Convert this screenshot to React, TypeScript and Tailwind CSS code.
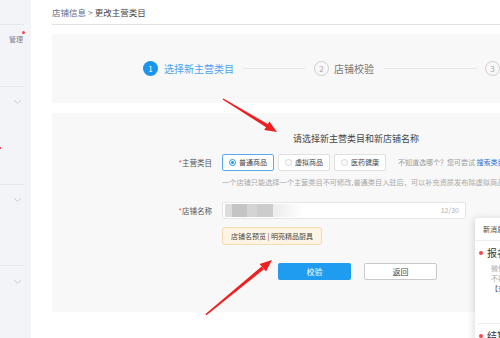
import React from "react";

const font = { fontFamily: '"Noto Sans CJK SC", "Noto Sans", sans-serif' };

function Chevron() {
  return (
    <svg width="9" height="6" viewBox="0 0 9 6" className="block">
      <path d="M1 1l3.5 3.5L8 1" fill="none" stroke="#c4c8d0" strokeWidth="0.9" />
    </svg>
  );
}

function Sidebar() {
  return (
    <div className="w-[31px] shrink-0 bg-[#f3f4f8] flex flex-col">
      <div className="h-[25px] w-[24px] border-b border-[#e6e8ee]" />
      <div className="h-[62px] w-[24px] border-b border-[#e6e8ee] flex justify-end pt-[9px] pr-[1px]">
        <span className="relative text-[7px] leading-[10px] text-[#7a8090]">
          管理
          <span className="absolute right-[-2px] top-[-3px] w-[3px] h-[3px] rounded-full bg-[#f5474a]" />
        </span>
      </div>
      <div className="h-[98px] w-[24px] border-b border-[#e6e8ee] relative">
        <div className="absolute left-[13px] top-[12px]"><Chevron /></div>
        <div className="absolute left-0 top-[60px] w-[1px] h-[2px] bg-[#f5474a]" />
      </div>
      <div className="h-[81px] w-[24px] border-b border-[#e6e8ee] relative">
        <div className="absolute left-[13px] top-[12px]"><Chevron /></div>
      </div>
      <div className="relative">
        <div className="absolute left-[13px] top-[13px]"><Chevron /></div>
      </div>
    </div>
  );
}

function Steps() {
  return (
    <div className="h-[69px] bg-[#f8f8f8] flex items-center pl-[91px]">
      <div className="w-[15px] h-[15px] rounded-full bg-[#1a94ee] text-white text-[8px] flex items-center justify-center shrink-0">1</div>
      <span className="ml-[6px] text-[10px] text-[#4ba3f3] whitespace-nowrap">选择新主营类目</span>
      <div className="ml-[9px] w-[62px] h-px bg-[#e6e6e6] shrink-0" />
      <div className="ml-[9px] w-[15px] h-[15px] rounded-full border border-[#cfcfcf] text-[#a8a8a8] text-[8px] flex items-center justify-center shrink-0">2</div>
      <span className="ml-[5px] text-[10px] text-[#777] whitespace-nowrap">店铺校验</span>
      <div className="ml-[10px] w-[93px] h-px bg-[#e6e6e6] shrink-0" />
      <div className="ml-[8px] w-[15px] h-[15px] rounded-full border border-[#cfcfcf] text-[#a8a8a8] text-[8px] flex items-center justify-center shrink-0">3</div>
    </div>
  );
}

function Radio({ label, checked }: { label: string; checked?: boolean }) {
  return (
    <div
      className={
        checked
          ? "w-[52px] h-[17px] bg-white border border-[#5aa9f0] rounded-[2px] flex items-center pl-[6px] shrink-0"
          : "w-[52px] h-[17px] bg-white border border-[#e0e0e0] rounded-[2px] flex items-center pl-[6px] shrink-0"
      }
    >
      {checked ? (
        <span className="w-[7px] h-[7px] rounded-full border border-[#1a94ee] flex items-center justify-center">
          <span className="w-[3px] h-[3px] rounded-full bg-[#1a94ee]" />
        </span>
      ) : (
        <span className="w-[7px] h-[7px] rounded-full border border-[#d4d4d4]" />
      )}
      <span className="ml-[3px] text-[7px] text-[#444] whitespace-nowrap">{label}</span>
    </div>
  );
}

function FormPanel() {
  return (
    <div className="mt-[10px] h-[199px] bg-[#f8f8f8] flex flex-col">
      <div className="pt-[20px] pl-[241px] text-[9px] leading-[12px] text-[#444] whitespace-nowrap">
        请选择新主营类目和新店铺名称
      </div>
      <div className="mt-[9px] flex items-center">
        <div className="w-[170px] pr-[10px] text-right text-[7.5px] text-[#555] shrink-0">
          <span className="text-[#f5474a]">*</span>主营类目
        </div>
        <div className="flex items-center gap-[4px]">
          <Radio label="普通商品" checked />
          <Radio label="虚拟商品" />
          <Radio label="医药健康" />
        </div>
        <span className="ml-[12px] text-[7px] text-[#9a9a9a] whitespace-nowrap">
          不知道选哪个？您可尝试 <span className="text-[#2b6fd1]">搜索类目</span>
        </span>
      </div>
      <div className="mt-[6px] pl-[170px] text-[7.2px] leading-[10px] text-[#a8a8a8] whitespace-nowrap">
        一个店铺只能选择一个主营类目不可修改,普通类目入驻后，可以补充资质发布除虚拟商品以外的商品
      </div>
      <div className="mt-[15px] flex items-center">
        <div className="w-[170px] pr-[10px] text-right text-[7.5px] text-[#555] shrink-0">
          <span className="text-[#f5474a]">*</span>店铺名称
        </div>
        <div className="w-[244px] h-[17px] bg-white border border-[#e6e6e6] rounded-[2px] flex items-center pl-[2px] pr-[6px]">
          <div className="flex h-[13px]">
            <div className="w-[7px] bg-[#dcdcdc]" />
            <div className="w-[15px] bg-[#c4c4c4]" />
            <div className="w-[10px] bg-[#d4d4d4]" />
            <div className="w-[16px] bg-[#cccccc]" />
            <div className="w-[30px] bg-gradient-to-r from-[#ececec] to-white" />
          </div>
          <span className="ml-auto text-[7px] text-[#b0b0b0]">12/30</span>
        </div>
      </div>
      <div className="mt-[8px] ml-[170px] w-[100px] h-[18px] bg-[#fdf4e3] border border-[#f3dcb0] rounded-[3px] flex items-center justify-center text-[7px] text-[#444] whitespace-nowrap">
        店铺名预览 | 明亮精品厨具
      </div>
      <div className="mt-[18px] ml-[226px] flex items-center gap-[13px]">
        <div className="w-[73px] h-[17px] bg-[#1f9bf0] rounded-[2px] flex items-center justify-center text-[8px] text-white">
          校验
        </div>
        <div className="w-[73px] h-[17px] bg-white border border-[#c9c9c9] rounded-[2px] flex items-center justify-center text-[8px] text-[#444]">
          返回
        </div>
      </div>
    </div>
  );
}

function Arrows() {
  return (
    <svg className="absolute inset-0 pointer-events-none" width="500" height="338" viewBox="0 0 500 338">
      <polygon points="222.6,99.5 223.4,98.5 268.5,124.5 266.5,127.5" fill="#ee2020" />
      <polygon points="277,132 264.2,130 269.4,121.4" fill="#ee2020" />
      <polygon points="205.5,314 206.5,315.3 263.9,269.2 261.6,266.4" fill="#ee2020" />
      <polygon points="272,260 266,271.5 259.6,263.9" fill="#ee2020" />
    </svg>
  );
}

function SideCard() {
  return (
    <div className="absolute left-[475px] top-[218px] w-[60px] h-[140px] bg-white shadow-[-2px_0_6px_rgba(0,0,0,0.12)] rounded-tl-[3px]">
      <div className="h-[23px] border-b border-[#eeeeee] flex items-center pl-[8px] text-[7px] text-[#444] whitespace-nowrap">
        新消息提醒
      </div>
      <div className="pl-[4px] pt-[5px]">
        <div className="flex items-center">
          <span className="w-[4px] h-[4px] rounded-full bg-[#f5474a]" />
          <span className="ml-[4px] text-[10px] leading-[14px] text-[#333] whitespace-nowrap">报名提醒</span>
        </div>
        <div className="pl-[12px] mt-[3px] text-[7px] leading-[10px] text-[#aaa] whitespace-nowrap">
          <div>微信通知</div>
          <div>不再提醒</div>
          <div className="text-[#666]">【查看】</div>
        </div>
      </div>
      <div className="mt-[30px] mx-[3px] border-t border-[#eeeeee]" />
      <div className="pl-[4px] pt-[5px] flex items-center">
        <span className="w-[4px] h-[4px] rounded-full bg-[#f5474a]" />
        <span className="ml-[4px] text-[10px] leading-[14px] text-[#333] whitespace-nowrap">结算</span>
      </div>
    </div>
  );
}

export default function App() {
  return (
    <div className="relative w-[500px] h-[338px] overflow-hidden bg-white flex" style={font}>
      <Sidebar />
      <div className="flex-1 pl-[21px] flex flex-col">
        <div className="h-[25px] border-b border-[#e2e2e2] flex items-center text-[8.5px] whitespace-nowrap">
          <span className="text-[#5b6b8c]">店铺信息</span>
          <span className="ml-[2px] text-[#888]">&gt;</span>
          <span className="ml-[2px] text-[#444]">更改主营类目</span>
        </div>
        <div className="mt-[9px]">
          <Steps />
        </div>
        <FormPanel />
      </div>
      <Arrows />
      <SideCard />
    </div>
  );
}
